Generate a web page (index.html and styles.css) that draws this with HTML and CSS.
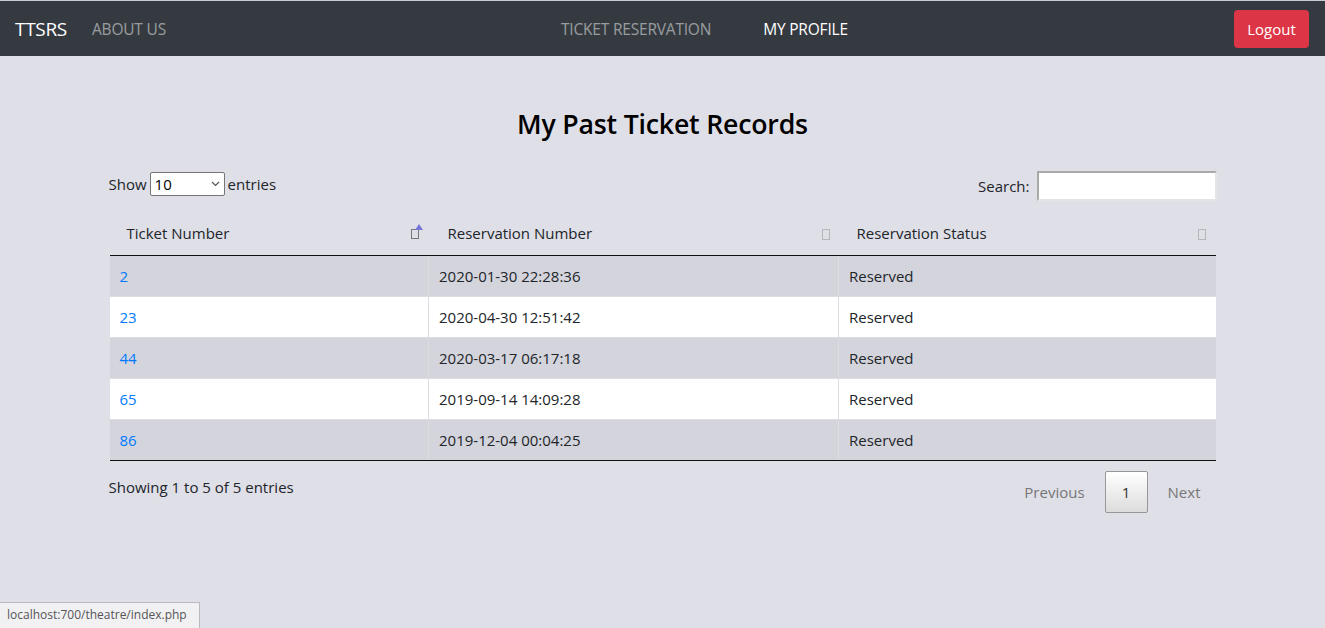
FILE: index.html
```html
<!DOCTYPE html>
<html>
<head>
<meta charset="utf-8">
<link rel="stylesheet" href="styles.css">
</head>
<body>
<nav class="navbar">
  <div class="nav-left">
    <span class="brand">TTSRS</span>
    <a class="nav-link">ABOUT US</a>
  </div>
  <div class="nav-center">
    <a class="nav-link">TICKET RESERVATION</a>
    <a class="nav-link active">MY PROFILE</a>
  </div>
  <button class="logout">Logout</button>
</nav>

<main class="container">
  <h1 class="title">My Past Ticket Records</h1>
  <div class="controls">
    <label class="length">Show <span class="select">10<svg width="9" height="6" viewBox="0 0 9 6"><path d="M1 1l3.5 3.5L8 1" fill="none" stroke="#555" stroke-width="1.2"/></svg></span> entries</label>
    <label class="search">Search: <span class="search-input"></span></label>
  </div>
  <table class="records">
    <thead>
      <tr>
        <th class="c1"><div class="th-in"><span>Ticket Number</span><span class="sort asc"></span></div></th>
        <th class="c2"><div class="th-in"><span>Reservation Number</span><span class="sort"></span></div></th>
        <th class="c3"><div class="th-in"><span>Reservation Status</span><span class="sort"></span></div></th>
      </tr>
    </thead>
    <tbody>
      <tr class="odd"><td><a>2</a></td><td>2020-01-30 22:28:36</td><td>Reserved</td></tr>
      <tr><td><a>23</a></td><td>2020-04-30 12:51:42</td><td>Reserved</td></tr>
      <tr class="odd"><td><a>44</a></td><td>2020-03-17 06:17:18</td><td>Reserved</td></tr>
      <tr><td><a>65</a></td><td>2019-09-14 14:09:28</td><td>Reserved</td></tr>
      <tr class="odd"><td><a>86</a></td><td>2019-12-04 00:04:25</td><td>Reserved</td></tr>
    </tbody>
  </table>
  <div class="footer-row">
    <div class="info">Showing 1 to 5 of 5 entries</div>
    <div class="paging">
      <span class="pg-btn">Previous</span>
      <span class="pg-num">1</span>
      <span class="pg-btn last">Next</span>
    </div>
  </div>
</main>

<div class="statusbar">localhost:700/theatre/index.php</div>
</body>
</html>
```

FILE: styles.css
```css
* { box-sizing: border-box; }
html, body { margin: 0; padding: 0; }
body {
  background: #dfdfe8;
  font-family: "Open Sans", "Noto Sans", sans-serif;
  font-size: 15px;
  color: #212529;
  border-top: 1px solid #c9ccd6;
  height: 628px;
  overflow: hidden;
}
.navbar {
  height: 55px;
  background: #343a40;
  display: flex;
  align-items: center;
  padding: 0 16px 0 15px;
  position: relative;
}
.nav-left { display: flex; align-items: center; }
.brand { color: #fff; font-size: 19px; margin-right: 25px; letter-spacing: -0.3px; }
.nav-link { color: rgba(255,255,255,0.5); font-size: 15.5px; letter-spacing: -0.2px; }
.nav-center {
  position: absolute;
  left: 561px;
  top: 0; height: 55px;
  display: flex; align-items: center; gap: 52px;
}
.nav-link.active { color: #fff; }
.logout {
  margin-left: auto;
  background: #dc3545;
  color: #fff;
  border: none;
  border-radius: 4px;
  width: 75px;
  height: 38px;
  font-family: inherit;
  font-size: 15px;
  margin-top: 1px;
}
.container { width: 1108px; margin: 0 auto; padding-top: 50px; }
.title {
  text-align: center;
  font-size: 26.7px;
  font-weight: 600;
  margin: 0 0 26px;
  color: #000;
  letter-spacing: -0.2px;
  line-height: 36px;
}
.controls { display: flex; justify-content: space-between; align-items: center; height: 32px; }
.length { display: flex; align-items: center; gap: 3px; }
.select {
  display: inline-flex; align-items: center; justify-content: space-between;
  width: 75px; height: 24px;
  background: #fff; border: 1px solid #767676; border-radius: 2px;
  padding: 0 4px 0 4px; font-size: 15px; color: #000;
}
.search { display: flex; align-items: center; gap: 7px; margin-top: 4px; }
.search-input {
  width: 180px; height: 30px; background: #fff;
  border: 2px solid #a9a9a9; border-right-color: #e4e4e4; border-bottom-color: #e4e4e4;
}
.records {
  width: 1106px; margin: 12px 1px 0; border-collapse: collapse;
}
.records th {
  font-weight: normal; text-align: left; height: 43px;
  border-bottom: 1px solid #111; padding: 0;
}
.th-in { display: flex; justify-content: space-between; align-items: center; padding: 0 10px 0 17px; }
.c1 { width: 319px; }
.c2 { width: 410px; }
.c2 .th-in { padding-left: 19px; padding-right: 9px; }
.c3 .th-in { padding-left: 18px; padding-right: 10px; }
.sort { width: 8px; height: 11px; border: 1px solid #b5b5bb; position: relative; margin-top: 2px; }
.sort.asc { border-color: #777; width: 8px; height: 10px; }
.sort.asc::after {
  content: ""; position: absolute; right: -5px; top: -6px;
  border-left: 4px solid transparent; border-right: 4px solid transparent;
  border-bottom: 6px solid #7477d6;
}
.records td { height: 41px; padding: 0 10px; border-left: 1px solid #dcdce2; }
.records td:first-child { border-left: none; }
.records tbody tr { background: #fff; }
.records tbody tr.odd { background: #d4d4dd; }
.records tbody tr + tr td { border-top: 1px solid #dcdce2; }
.records tbody tr:last-child td { border-bottom: 1px solid #111; }
.records a { color: #007bff; }
.footer-row { display: flex; justify-content: space-between; align-items: flex-start; padding-top: 16px; }
.paging { display: flex; align-items: center; margin-top: -6px; }
.pg-btn { color: #777; padding: 0 20px; }
.pg-btn.last { padding-right: 16px; }
.pg-num {
  width: 43px; height: 42px; display: flex; align-items: center; justify-content: center;
  border: 1px solid #979797; border-radius: 2px;
  background: linear-gradient(#fff, #dcdcdc); color: #333;
}
.statusbar {
  position: absolute; left: 0; bottom: 0;
  width: 200px; height: 26px;
  background: #f1f1f4; border: 1px solid #b9b9c0; border-left: none; border-bottom: none;
  font-size: 12px; color: #555; padding: 3px 0 0 7px;
}
```
